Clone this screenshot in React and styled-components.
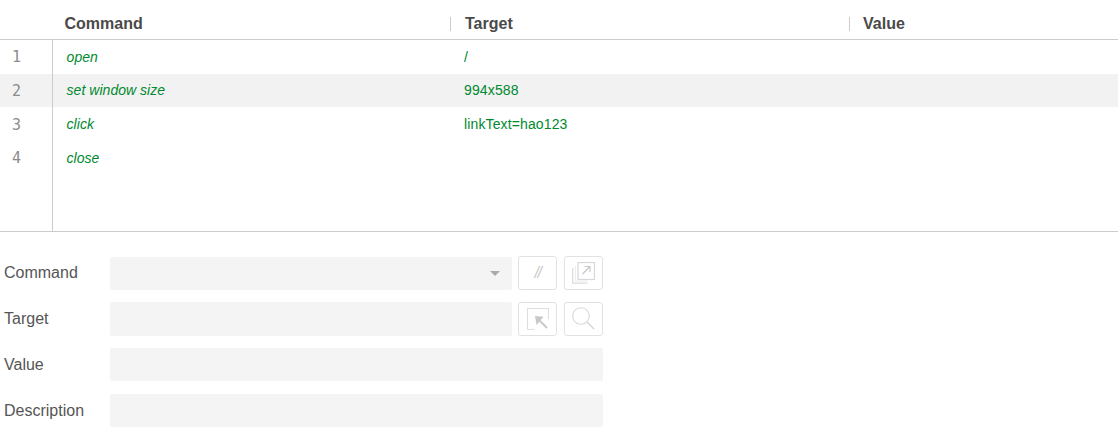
import React from 'react';
import styled, { createGlobalStyle } from 'styled-components';

const Global = createGlobalStyle`
  html, body { margin: 0; padding: 0; background: #fff; }
  body { font-family: "Liberation Sans", Arial, sans-serif; }
`;

const Page = styled.div`
  width: 1118px;
  height: 437px;
  overflow: hidden;
`;

const Table = styled.div`
  height: 231px;
  border-bottom: 1px solid #ccc;
  display: flex;
  flex-direction: column;
`;

const HeaderRow = styled.div`
  height: 31px;
  padding-top: 8px;
  flex: none;
  border-bottom: 1px solid #ccc;
  display: grid;
  grid-template-columns: 450px 399px 1fr;
  align-items: center;
`;

const HeaderCell = styled.div`
  font-size: 16px;
  font-weight: 700;
  color: #4a4a4a;
  line-height: 14px;
  padding-left: ${p => p.$indent}px;
  box-sizing: border-box;
  ${p => p.$divider && 'border-left: 1px solid #ccc;'}
`;

const Body = styled.div`
  flex: 1;
  position: relative;
  display: flex;
  flex-direction: column;
`;

const Gutter = styled.div`
  position: absolute;
  left: 52px;
  top: 0;
  bottom: 0;
  width: 1px;
  background: #ccc;
`;

const Row = styled.div`
  height: 33.67px;
  flex: none;
  display: grid;
  grid-template-columns: 52px 412px 1fr;
  align-items: center;
  background: ${p => (p.$striped ? '#f2f2f2' : 'transparent')};
`;

const Index = styled.div`
  font-family: "DejaVu Sans Mono", monospace;
  font-size: 15px;
  color: #8c8c8c;
  padding: 1px 0 0 12px;
`;

const Name = styled.div`
  font-size: 14px;
  font-style: italic;
  color: #00892f;
  padding-left: 14.6px;
  letter-spacing: 0.03px;
`;

const Arg = styled.div`
  font-size: 14px;
  color: #00892f;
  letter-spacing: 0.13px;
`;

const Form = styled.div`
  padding: 24.7px 0 0 4px;
  display: flex;
  flex-direction: column;
  gap: 12.33px;
`;

const FormRow = styled.div`
  display: grid;
  grid-template-columns: 106px 493px;
  align-items: center;
  height: 33.33px;
`;

const Label = styled.div`
  font-size: 16px;
  color: #555;
  margin-top: ${p => (p.$low ? '1px' : '-0.4px')};
`;

const Controls = styled.div`
  display: flex;
  gap: 6.25px;
  height: 33.33px;
`;

const Field = styled.div`
  flex: 1;
  height: 33.33px;
  background: #f4f4f4;
  border-radius: 2px;
  position: relative;
`;

const Caret = styled.span`
  position: absolute;
  right: 12px;
  top: 14px;
  width: 0;
  height: 0;
  border-left: 5px solid transparent;
  border-right: 5px solid transparent;
  border-top: 5px solid #b0a8a8;
`;

const IconButton = styled.button`
  width: 39.5px;
  height: 34px;
  margin-top: -0.7px;
  flex: none;
  padding: 0;
  background: #fff;
  border: 1px solid #e2e2e2;
  border-radius: 3px;
  display: flex;
  align-items: center;
  justify-content: center;
  color: #c9c9c9;
  font-size: 16px;
  font-style: italic;
  letter-spacing: -1.5px;
  font-family: "Liberation Sans", Arial, sans-serif;
`;

const commands = [
  { name: 'open', target: '/' },
  { name: 'set window size', target: '994x588' },
  { name: 'click', target: 'linkText=hao123' },
  { name: 'close', target: '' },
];

const OpenIcon = () => (
  <svg width="23" height="22" viewBox="0 0 23 22" fill="none">
    <rect x="6" y="0.5" width="16.5" height="17" stroke="#d4d8dc" strokeWidth="1.2" />
    <path d="M10.5 12 L18 4.5 M12.5 4.5 H18 V10" stroke="#c6c6c6" strokeWidth="1.1" />
    <path d="M0.7 6 V21.2 H15.5" stroke="#dcdcdc" strokeWidth="1.3" />
    <path d="M3.5 4 V19 H15.5" stroke="#ececec" strokeWidth="1" />
  </svg>
);

const SelectIcon = () => (
  <svg width="22" height="22" viewBox="0 0 22 22" fill="none">
    <path d="M7 21.5 H0.5 V0.5 H21.5 V11" stroke="#dcdfe2" strokeWidth="1.1" />
    <path d="M8 8 L16.5 8.7 L9.5 17 Z" fill="#c8c8c8" />
    <path d="M12 12 L20 20" stroke="#c8c8c8" strokeWidth="1.8" />
  </svg>
);

const SearchIcon = () => (
  <svg width="23" height="23" viewBox="0 0 23 23" fill="none">
    <circle cx="9" cy="9" r="8.3" stroke="#d8d8d8" strokeWidth="1.1" />
    <path d="M15 15 L22 22" stroke="#d2d2d2" strokeWidth="1.3" />
  </svg>
);

export default function App() {
  return (
    <Page>
      <Global />
      <Table>
        <HeaderRow>
          <HeaderCell $indent={64.5}>Command</HeaderCell>
          <HeaderCell $indent={14} $divider>Target</HeaderCell>
          <HeaderCell $indent={13} $divider>Value</HeaderCell>
        </HeaderRow>
        <Body>
          <Gutter />
          {commands.map((c, i) => (
            <Row key={c.name} $striped={i === 1}>
              <Index>{i + 1}</Index>
              <Name>{c.name}</Name>
              <Arg>{c.target}</Arg>
            </Row>
          ))}
        </Body>
      </Table>
      <Form>
        <FormRow>
          <Label>Command</Label>
          <Controls>
            <Field><Caret /></Field>
            <IconButton>//</IconButton>
            <IconButton><OpenIcon /></IconButton>
          </Controls>
        </FormRow>
        <FormRow>
          <Label>Target</Label>
          <Controls>
            <Field />
            <IconButton><SelectIcon /></IconButton>
            <IconButton><SearchIcon /></IconButton>
          </Controls>
        </FormRow>
        <FormRow>
          <Label $low>Value</Label>
          <Controls><Field /></Controls>
        </FormRow>
        <FormRow>
          <Label $low>Description</Label>
          <Controls><Field /></Controls>
        </FormRow>
      </Form>
    </Page>
  );
}
